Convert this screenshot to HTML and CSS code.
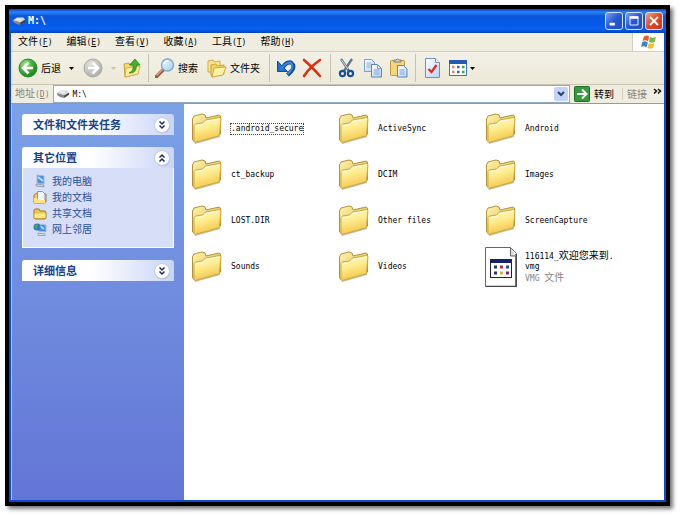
FILE: index.html
```html
<!DOCTYPE html>
<html lang="zh-CN">
<head>
<meta charset="utf-8">
<title>M:\</title>
<link rel="stylesheet" href="styles.css">
</head>
<body>
<svg class="defs" aria-hidden="true">
  <defs>
    <linearGradient id="gFolder" x1="0" y1="0" x2="0.3" y2="1"><stop offset="0" stop-color="#fffbd0"/><stop offset=".5" stop-color="#fdec8e"/><stop offset="1" stop-color="#f4c64c"/></linearGradient>
    <linearGradient id="gBack" x1="0" y1="0" x2="1" y2="1"><stop offset="0" stop-color="#fff5ae"/><stop offset="1" stop-color="#d9ab3c"/></linearGradient>
    <radialGradient id="gGreen" cx=".35" cy=".3" r=".8"><stop offset="0" stop-color="#a5e58b"/><stop offset=".5" stop-color="#3fae36"/><stop offset="1" stop-color="#17721b"/></radialGradient>
    <radialGradient id="gGray" cx=".35" cy=".3" r=".8"><stop offset="0" stop-color="#e2e2de"/><stop offset="1" stop-color="#a8a8a4"/></radialGradient>
    <linearGradient id="gPage" x1="0" y1="0" x2="1" y2="1"><stop offset="0" stop-color="#fff"/><stop offset="1" stop-color="#b9d2f6"/></linearGradient>
    <linearGradient id="gLens" x1="0" y1="0" x2="1" y2="1"><stop offset="0" stop-color="#f4fcff"/><stop offset="1" stop-color="#9bcdf0"/></linearGradient>
  </defs>
  <symbol id="folder" viewBox="0 0 32 32">
    <path d="M3 28 29 22 31 6 29 24 4 31Z" fill="#8d7b4a" opacity=".5"/>
    <path d="M1.500 27V6L3 3l8-2 3 1 1 3 13-3 1.500 1V21L4 29Z" fill="url(#gBack)" stroke="#b39235"/>
    <path d="M3 12.500 4.500 11l7-1 3-3L28.500 4.500l1.500 1-1.500 16.500-1 1L4 29.500l-1-1Z" fill="url(#gFolder)" stroke="#cda741"/>
    <path d="M4.500 13 12 11.500l3-3L28.500 6" fill="none" stroke="#fffde8"/>
  </symbol>
  <symbol id="drive" viewBox="0 0 16 10">
    <path d="M1 4 6 1h7l2 3-5 4H5Z" fill="#777" />
    <path d="M1 3.500 6 .5h7L15 3 9.500 6Z" fill="#d8d8d4"/>
    <path d="M1 3.500 9.500 6 9 9 2 6Z" fill="#888"/><path d="M9.500 6 15 3v2L9.500 9Z" fill="#444"/>
    <path d="M5 2.500h5" stroke="#fff"/>
  </symbol>
  <symbol id="caret" viewBox="0 0 5 3"><path d="M0 0h5L2.500 3Z" fill="currentColor"/></symbol>
  <symbol id="down" viewBox="0 0 18 18"><circle cx="9.500" cy="10" r="7.500" fill="#8c98cb" opacity=".5"/><circle cx="9" cy="9" r="7.500" fill="#fff" stroke="#c3cbe6"/><path d="M6.500 5.500 9 8l2.500-2.500M6.500 9.500 9 12l2.500-2.500" fill="none" stroke="#1b2b5c" stroke-width="1.500"/></symbol>
  <symbol id="up" viewBox="0 0 18 18"><circle cx="9.500" cy="10" r="7.500" fill="#8c98cb" opacity=".5"/><circle cx="9" cy="9" r="7.500" fill="#fff" stroke="#c3cbe6"/><path d="M6.500 8.500 9 6l2.500 2.500M6.500 12.500 9 10l2.500 2.500" fill="none" stroke="#1b2b5c" stroke-width="1.500"/></symbol>
</svg>

<main class="window">
  <header class="titlebar">
    <svg class="drive"><use href="#drive"/></svg>
    <h1 class="mono">M:\</h1>
    <button class="caption" aria-label="最小化"><svg viewBox="0 0 18 18"><path d="M4 12.500h6" stroke="#fff" stroke-width="3"/></svg></button>
    <button class="caption" aria-label="最大化"><svg viewBox="0 0 18 18"><path d="M4.500 5v8.500h9V5" fill="none" stroke="#fff"/><path d="M4 5h10" stroke="#fff" stroke-width="3"/></svg></button>
    <button class="caption close" aria-label="关闭"><svg viewBox="0 0 18 18"><path d="m4.500 4.500 9 9m0-9-9 9" stroke="#fff" stroke-width="2"/></svg></button>
  </header>

  <nav class="menubar">
    <button>文件<span class="mono">(<u>F</u>)</span></button>
    <button>编辑<span class="mono">(<u>E</u>)</span></button>
    <button>查看<span class="mono">(<u>V</u>)</span></button>
    <button>收藏<span class="mono">(<u>A</u>)</span></button>
    <button>工具<span class="mono">(<u>T</u>)</span></button>
    <button>帮助<span class="mono">(<u>H</u>)</span></button>
    <span class="brand"><svg viewBox="0 0 16 16"><path d="M3 2.500Q5.500.5 8 2.500L7 7.500Q4.500 5.500 1.500 7Z" fill="#e8582a"/><path d="M9 3q2.500 1.500 6 0l-1.500 5Q11 9.500 8 8Z" fill="#78b63c"/><path d="M1.300 8Q4 6.500 6.800 8.500L5.500 13.500Q3 11.500 0 13Z" fill="#3f7fd8"/><path d="M7.800 9q2.700 1.500 5.500 0L12 14q-3 1.500-5.500 0Z" fill="#f3bd2c"/></svg></span>
  </nav>

  <div class="toolbar">
    <button class="tool"><svg class="i20" viewBox="0 0 20 20"><circle cx="10" cy="10" r="9" fill="url(#gGreen)" stroke="#2d8b2d"/><path d="M10.500 4.500 5 10l5.500 5.500M5.500 10H15" fill="none" stroke="#fff" stroke-width="2.600"/></svg>后退</button>
    <button class="drop" aria-label="后退列表"><svg><use href="#caret"/></svg></button>
    <button class="tool" aria-label="前进" disabled><svg class="i20" viewBox="0 0 20 20"><circle cx="10" cy="10" r="9" fill="url(#gGray)" stroke="#aaa9a3"/><path d="M9.500 4.500 15 10l-5.500 5.500M14.500 10H5" fill="none" stroke="#fff" stroke-width="2.600"/></svg></button>
    <button class="drop faint" aria-label="前进列表" disabled><svg><use href="#caret"/></svg></button>
    <button class="tool" aria-label="向上"><svg class="i20" viewBox="0 0 20 20"><path d="M2 6l5-1 1 2 8-1v10L3 19Z" fill="#f5d970" stroke="#c6a141"/><path d="M4 10l14-2-2 8L3 19Z" fill="#fff0a0" stroke="#d3b04c"/><path d="M7 15q5-2 4-8H7.500L13 1l5 6h-3.500q0 9-7.500 8Z" fill="#43b32f" stroke="#227d1c" stroke-width=".7"/></svg></button>
    <span class="sep"></span>
    <button class="tool"><svg class="i20" viewBox="0 0 20 20"><path d="m1.500 18.500 7-7" stroke="#925a43" stroke-width="3.500" stroke-linecap="round"/><path d="m1.500 17.500 6-6" stroke="#e0a184" stroke-width="1.500"/><circle cx="12.500" cy="7" r="6" fill="url(#gLens)" stroke="#81a7cb" stroke-width="1.400"/><path d="M9 6q1-3 4-3" fill="none" stroke="#fff" stroke-width="1.500"/></svg>搜索</button>
    <button class="tool folders"><svg class="i20" viewBox="0 0 20 20"><path d="M1 14V3l5-1 1 2 6-1v11Z" fill="#fbe68a" stroke="#d2ac42"/><path d="M4 17V7l5-1 1 2 7-1v9L5 19Z" fill="#f5d466" stroke="#caa23a"/><path d="M7 10l12-1-3 8L5 19Z" fill="#fff2a5" stroke="#cfa941"/></svg>文件夹</button>
    <span class="sep"></span>
    <button class="tool" aria-label="撤消"><svg class="i20" viewBox="0 0 20 20"><path d="M6 10.500Q10 3.500 15 4.500q5 4 0 9L11.500 17" fill="none" stroke="#124a9c" stroke-width="4"/><path d="M1.500 3v10.500h10L8 10 5 7Z" fill="#2474cf" stroke="#124a9c"/><path d="M5 11Q10 4 14.500 4.500q4 3.500 0 8.500L11.500 16" fill="none" stroke="#3989dd" stroke-width="2"/></svg></button>
    <button class="tool delete" aria-label="删除"><svg class="i20" viewBox="0 0 20 20"><path d="M2 2Q9 8 18 18M18 2Q8 9 2 18" fill="none" stroke="#df2d10" stroke-width="2.600" stroke-linecap="round"/></svg></button>
    <span class="sep"></span>
    <button class="tool" aria-label="剪切"><svg class="i20" viewBox="0 0 20 20"><path d="M4 1 12 13M15 1 7 13" stroke="#66778c" stroke-width="2.400"/><path d="M4.500 2 11 11" stroke="#d3dce7"/><circle cx="5.500" cy="15.500" r="2.600" fill="none" stroke="#1c4f99" stroke-width="2.200"/><circle cx="13.500" cy="15.500" r="2.600" fill="none" stroke="#1c4f99" stroke-width="2.200"/></svg></button>
    <button class="tool" aria-label="复制"><svg class="i20" viewBox="0 0 20 20"><path d="M1.500 1.500h7l3 3v9h-10Z" fill="url(#gPage)" stroke="#7c9cc9"/><path d="M3.500 5h5m-5 2h5m-5 2h4" stroke="#8eb0df"/><path d="M8.500 6.500h6l4 4v8.500h-10Z" fill="url(#gPage)" stroke="#5f84b9"/><path d="M14.500 6.500v4h4M10.500 12h6m-6 2h6m-6 2h6" fill="none" stroke="#7da5dc"/></svg></button>
    <button class="tool" aria-label="粘贴"><svg class="i20" viewBox="0 0 20 20"><rect x="1.500" y="2.500" width="14" height="15" rx="1" fill="#f5d777" stroke="#bd9645"/><path d="M5 4V2h2q1.500-2 3 0h2v2Z" fill="#ddd" stroke="#777"/><path d="M8.500 7.500h6l3.500 3.500v8H8.500Z" fill="url(#gPage)" stroke="#5f84b9"/><path d="M10.500 12h5m-5 2h5m-5 2h5" stroke="#7da5dc"/></svg></button>
    <span class="sep"></span>
    <button class="tool" aria-label="属性"><svg class="i20" viewBox="0 0 20 20"><path d="M3.500.500h10l4 4v15h-14Z" fill="url(#gPage)" stroke="#6e8fc0"/><path d="M13.500.500v4h4" fill="#fff" stroke="#6e8fc0"/><path d="m6.500 11 3 3 5-7" fill="none" stroke="#e02a20" stroke-width="2.200"/></svg></button>
    <button class="tool views" aria-label="查看方式"><svg class="i20" viewBox="0 0 20 20"><rect x="1.500" y="2.500" width="17" height="15" fill="#fff" stroke="#3e74bb"/><path d="M1 4h18" stroke="#225cb2" stroke-width="4"/><path d="M4 9h2.500m-2.500 5h2.500" stroke="#c18a75" stroke-width="2.500"/><path d="M9 9h2.500m-2.500 5h2.500" stroke="#3b62a8" stroke-width="2.500"/><path d="M14 9h2.500m-2.500 5h2.500" stroke="#3ba04b" stroke-width="2.500"/></svg><svg class="caret"><use href="#caret"/></svg></button>
  </div>

  <div class="addressbar">
    <label for="address">地址<span class="mono">(<u>D</u>)</span></label>
    <div class="combo">
      <svg class="drive"><use href="#drive"/></svg>
      <input id="address" class="mono" type="text" value="M:\">
      <button aria-label="展开地址"><svg viewBox="0 0 8 6"><path d="m1 1 3 3 3-3" fill="none" stroke="#28436f" stroke-width="2"/></svg></button>
    </div>
    <button class="go"><svg viewBox="0 0 16 16"><rect x=".5" y=".5" width="15" height="15" rx="1" fill="#359a3b" stroke="#1c6c25"/><path d="M3 8h9M8 3.500 12.500 8 8 12.500" fill="none" stroke="#fff" stroke-width="2"/></svg>转到</button>
    <button class="links">链接<svg viewBox="0 0 9 7"><path d="m1 1 2.500 2L1 5.500M5 1l2.500 2L5 5.500" fill="none" stroke="#111" stroke-width="1.500"/></svg></button>
  </div>

  <div class="content">
    <aside class="sidebar">
      <section><h2><button>文件和文件夹任务<svg><use href="#down"/></svg></button></h2></section>
      <section>
        <h2><button>其它位置<svg><use href="#up"/></svg></button></h2>
        <ul>
          <li><a href="#computer"><svg viewBox="0 0 14 14"><path d="m4 1 7 1v8L4 9Z" fill="#4b8de0" stroke="#a9b6ca"/><path d="m5 3 5 4" stroke="#b5e1fc" stroke-width="2"/><path d="M3 10l8 1v2l-8-1Z" fill="#c9ced8" stroke="#77859a" stroke-width=".6"/></svg>我的电脑</a></li>
          <li><a href="#documents"><svg viewBox="0 0 14 14"><path d="M1 5l3-2 9 1v8l-2 1H1Z" fill="#f1ce5a" stroke="#a37c24"/><path d="M4.500 1.500h5L12 4v7H4.500Z" fill="#eff6ff" stroke="#799bc6"/><path d="M1 8h3l1 2h7v3H1Z" fill="#ffe583"/></svg>我的文档</a></li>
          <li><a href="#shared"><svg viewBox="0 0 14 14"><path d="M1 12V4l1-1h4l1 2h5l1 1v6l-1 1H2Z" fill="#edc84f" stroke="#a17a1c"/><path d="M1.500 7.500h11V12h-11Z" fill="#ffe884"/></svg>共享文档</a></li>
          <li><a href="#network"><svg viewBox="0 0 14 14"><path d="m5 2 8 1v7L5 9Z" fill="#438be5" stroke="#b2bdd0"/><path d="m7 4 4 3" stroke="#a6dcff" stroke-width="2"/><circle cx="4" cy="5" r="3.500" fill="#2f7ac9"/><path d="M1 4q3-3 4-1L3 7Z" fill="#4aaa48"/><path d="M5 11l7 1v1.500H5Z" fill="#d3d7df" stroke="#7985a0" stroke-width=".6"/></svg>网上邻居</a></li>
        </ul>
      </section>
      <section><h2><button>详细信息<svg><use href="#down"/></svg></button></h2></section>
    </aside>

    <div class="files">
      <button class="file mono"><svg><use href="#folder"/></svg><span class="focused">.android_secure</span></button>
      <button class="file mono"><svg><use href="#folder"/></svg><span>ActiveSync</span></button>
      <button class="file mono"><svg><use href="#folder"/></svg><span>Android</span></button>
      <button class="file mono"><svg><use href="#folder"/></svg><span>ct_backup</span></button>
      <button class="file mono"><svg><use href="#folder"/></svg><span>DCIM</span></button>
      <button class="file mono"><svg><use href="#folder"/></svg><span>Images</span></button>
      <button class="file mono"><svg><use href="#folder"/></svg><span>LOST.DIR</span></button>
      <button class="file mono"><svg><use href="#folder"/></svg><span>Other files</span></button>
      <button class="file mono"><svg><use href="#folder"/></svg><span>ScreenCapture</span></button>
      <button class="file mono"><svg><use href="#folder"/></svg><span>Sounds</span></button>
      <button class="file mono"><svg><use href="#folder"/></svg><span>Videos</span></button>
      <button class="file mono"><svg class="doc" viewBox="0 0 32 40"><path d="M.5.500h25l6 6v33H.5Z" fill="#fff" stroke="#666"/><path d="M31 7v32.500H1" fill="none" stroke="#444" stroke-width="1.500"/><path d="M25.500.500V9H31" fill="#ddd" stroke="#666"/><rect x="5.500" y="12.500" width="21" height="18" fill="#fff" stroke="#222"/><path d="M5 14h22" stroke="#152169" stroke-width="4"/><path d="M9 20h3m-3 6h3" stroke="#27346e" stroke-width="3"/><path d="M15 20h3" stroke="#c32a35" stroke-width="3"/><path d="M15 26h3" stroke="#d2b62d" stroke-width="3"/><path d="M21 20h3" stroke="#2943b0" stroke-width="3"/><path d="M21 26h3" stroke="#7c287c" stroke-width="3"/></svg><span>116114_<span class="han">欢迎您来到</span>.<br>vmg<br><span class="type">VMG <span class="han">文件</span></span></span></button>
    </div>
  </div>
</main>
</body>
</html>
```
FILE: styles.css
```css
* { box-sizing: border-box; }
body {
  margin: 0;
  min-height: 100vh;
  display: flex;
  padding: 5px 11px 11px 5px;
  background: #fff;
  color: #000;
  font: 10px/12px "Noto Sans CJK SC", sans-serif;
}
button, input {
  margin: 0;
  padding: 0;
  border: 0;
  background: none;
  color: inherit;
  font: inherit;
}
svg { display: block; flex: none; }
.defs { position: absolute; width: 0; height: 0; }
.mono, input.mono { font-family: "DejaVu Sans Mono", monospace; font-size: 8px; }
.han { font-family: "Noto Sans CJK SC", sans-serif; font-size: 10px; }

.window {
  flex: 1;
  display: flex;
  flex-direction: column;
  border: 4px solid #000;
  background: #0a4bd0;
  box-shadow: 3px 3px 4px #777;
  padding: 0 2px 2px;
}

.titlebar {
  display: flex;
  align-items: center;
  gap: 2px;
  height: 24px;
  margin: 0 -2px;
  padding: 0 3px;
  background: linear-gradient(#0b3fc4, #2a84f5 3px, #0a56dd 7px, #0558e8 16px, #0662f6 20px, #0340b8);
  color: #fff;
}
.titlebar h1 { flex: 1; margin: 0; font-size: 10px; font-weight: bold; }
.drive { width: 14px; height: 9px; }
.caption {
  width: 18px;
  height: 18px;
  border: 1px solid #d6e2fa;
  border-radius: 3px;
  background: linear-gradient(135deg, #7d9ff0, #2658d4 50%, #1f4fc4);
}
.caption.close { background: linear-gradient(135deg, #f0a08a, #dc4a28 50%, #c23a1a); }

.menubar {
  display: flex;
  align-items: stretch;
  height: 19px;
  padding-left: 7px;
  gap: 14px;
  background: #efeddf;
  border-bottom: 1px solid #d3cfbd;
}
.brand {
  margin-left: auto;
  width: 32px;
  display: grid;
  place-items: center;
  background: #fff;
  border-left: 1px solid #d3cfbd;
}
.brand svg { width: 16px; height: 16px; }

.toolbar {
  display: flex;
  align-items: center;
  height: 33px;
  padding: 0 7px;
  background: linear-gradient(#f3f1e6, #ece9d8);
  border-bottom: 1px solid #c9c5b2;
}
.tool { display: flex; align-items: center; gap: 3px; margin-right: 6px; }
.i20 { width: 20px; height: 20px; }
.drop { width: 8px; margin-right: 8px; display: grid; place-items: center; }
.drop svg, .caret { width: 5px; height: 3px; }
.faint { margin-right: 5px; color: #c2bfb2; }
.sep { width: 1px; height: 28px; margin-right: 6px; background: #c5c2b2; }
.folders { margin-left: 3px; margin-right: 9px; }
.delete { margin-right: 8px; }
.views { gap: 2px; }

.addressbar {
  display: flex;
  align-items: center;
  height: 18px;
  padding: 0 2px 0 4px;
  gap: 4px;
  background: #efeddf;
  color: #85837a;
}
.combo {
  flex: 1;
  display: flex;
  align-items: center;
  gap: 2px;
  height: 18px;
  padding: 0 1px 0 2px;
  border: 1px solid #8fa9c0;
  background: #fff;
  color: #000;
}
.combo input { flex: 1; min-width: 0; height: 14px; outline: 0; }
.combo button {
  width: 14px;
  height: 14px;
  display: grid;
  place-items: center;
  border-radius: 2px;
  background: #c3d3fb;
}
.combo button svg { width: 8px; height: 6px; }
.go { display: flex; align-items: center; gap: 4px; color: #000; }
.go svg { width: 16px; height: 16px; }
.links {
  display: flex;
  gap: 6px;
  margin-left: 4px;
  padding-left: 4px;
  border-left: 1px solid #d3cfbd;
}
.links svg { width: 9px; height: 7px; }

.content { flex: 1; display: flex; background: #fff; border-top: 1px solid #8b9cb0; }
.sidebar {
  width: 173px;
  padding: 10px;
  display: flex;
  flex-direction: column;
  gap: 12px;
  background: linear-gradient(#7ba2e7, #6375d6);
  border-left: 1px solid #b5cbf4;
  color: #23509f;
}
.sidebar h2 { margin: 0; font-size: 11px; line-height: 21px; color: #15418c; }
.sidebar h2 button {
  width: 100%;
  height: 21px;
  padding: 0 3px 0 11px;
  display: flex;
  align-items: center;
  justify-content: space-between;
  border-radius: 3px 3px 0 0;
  background: linear-gradient(90deg, #fff 45%, #c9d5f6);
}
.sidebar h2 svg { width: 18px; height: 18px; }
.sidebar ul {
  margin: 0;
  padding: 5px 10px 10px;
  list-style: none;
  background: #d6dff7;
  border: 1px solid #fff;
  border-top: 0;
}
.sidebar a {
  display: flex;
  align-items: center;
  gap: 5px;
  height: 16px;
  color: inherit;
  text-decoration: none;
}
.sidebar a svg { width: 14px; height: 14px; }

.files {
  flex: 1;
  display: grid;
  grid-template-columns: repeat(auto-fill, 147px);
  grid-auto-rows: 46px;
  align-content: start;
  padding: 2px 7px;
}
.file { display: flex; align-items: center; gap: 8px; text-align: left; line-height: 10px; white-space: nowrap; }
.file svg { width: 32px; height: 32px; }
.file .doc { height: 40px; }
.focused { outline: 1px dotted #444; }
.type { color: #858585; }
```
